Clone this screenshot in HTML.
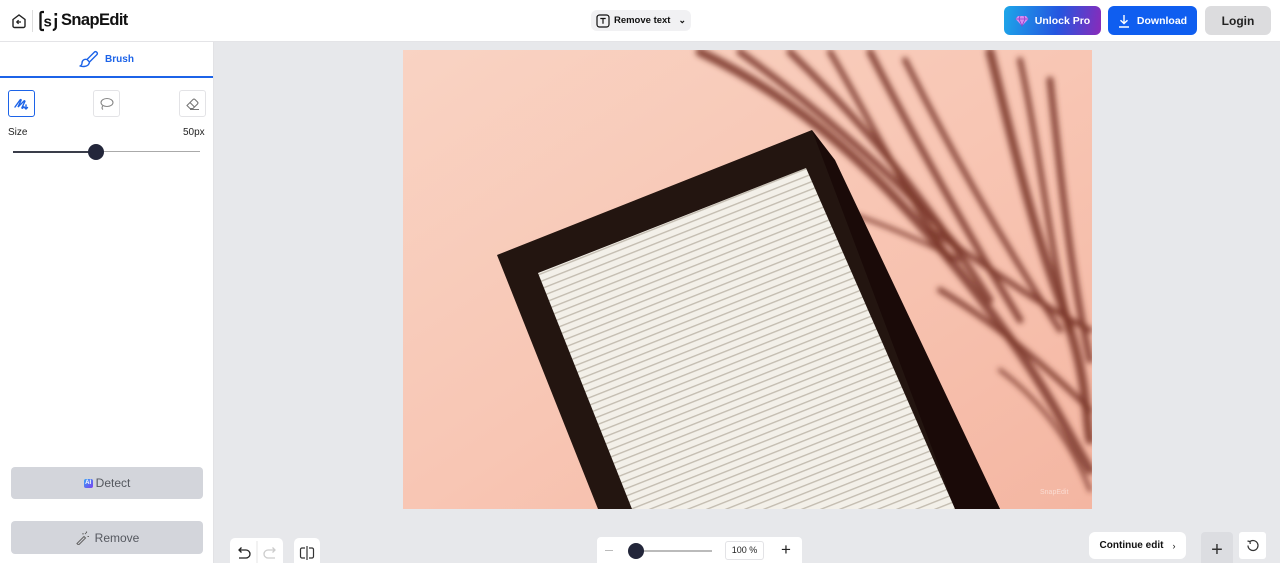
<!DOCTYPE html>
<html><head><meta charset="utf-8"><style>
*{box-sizing:border-box;margin:0;padding:0}
html,body{width:1280px;height:563px;overflow:hidden}
body{font-family:"Liberation Sans",sans-serif;background:#e7e8eb;position:relative;color:#111}
.hdr{position:absolute;left:0;top:0;width:1280px;height:42px;background:#fff;border-bottom:1px solid #e4e4e7}
.side{position:absolute;left:0;top:42px;width:214px;height:521px;background:#fff;border-right:1px solid #e2e2e5}
.abs{position:absolute}
.btn{position:absolute;border-radius:6px;font-weight:bold;font-size:11px;display:flex;align-items:center;justify-content:center}
.wbtn{position:absolute;background:#fff;border-radius:5px;display:flex;align-items:center;justify-content:center}
</style></head><body>
<div class="hdr">
 <svg class="abs" style="left:10px;top:12px" width="18" height="18" viewBox="0 0 18 18"><path d="M3 7.5L9 3l6 4.5V14a1.5 1.5 0 0 1-1.5 1.5h-9A1.5 1.5 0 0 1 3 14z" fill="none" stroke="#222" stroke-width="1.4"/><path d="M11 10H7m1.6-1.8L6.8 10l1.8 1.8" fill="none" stroke="#222" stroke-width="1.3"/></svg>
 <div class="abs" style="left:32px;top:10px;width:1px;height:22px;background:#ddd"></div>
 <svg class="abs" style="left:39px;top:10px" width="20" height="22" viewBox="0 0 20 22"><path d="M5 2H3a1.5 1.5 0 0 0-1.5 1.5v15A1.5 1.5 0 0 0 3 20h2" fill="none" stroke="#111" stroke-width="2.3"/><text x="4.5" y="16.5" font-family="Liberation Sans" font-weight="bold" font-size="15" fill="#111">s</text><rect x="15.5" y="3" width="2.6" height="2.6" fill="#111"/><path d="M16.8 8v9a3 3 0 0 1-3 3" fill="none" stroke="#111" stroke-width="2.3"/></svg>
 <div class="abs" style="left:61px;top:11px;font-size:16.5px;font-weight:bold;letter-spacing:-0.6px">SnapEdit</div>
 <div class="btn" style="left:591px;top:10px;width:100px;height:21px;background:#f1f1f3;font-size:9.5px;color:#111">
  <svg width="14" height="14" viewBox="0 0 14 14" style="margin-right:4px"><rect x="1" y="1" width="12" height="12" rx="2.5" fill="none" stroke="#111" stroke-width="1.2"/><path d="M4.3 4.5h5.4M7 4.5v5.3" stroke="#111" stroke-width="1.2"/></svg>Remove text<span style="margin-left:8px;font-size:9px">&#8964;</span></div>
 <div class="btn" style="left:1004px;top:6px;width:97px;height:29px;background:linear-gradient(100deg,#1da7e9,#2456e0 55%,#8b2ab9);color:#fff;font-size:10.5px">
  <svg width="14" height="12" viewBox="0 0 14 12" style="margin-right:6px"><path d="M3 1h8l2.5 3L7 11 .5 4z" fill="#d78cf0"/><path d="M.5 4h13M5 1 4 4l3 7 3-7-1-3" fill="none" stroke="#8a3bc9" stroke-width=".8"/></svg>Unlock Pro</div>
 <div class="btn" style="left:1108px;top:6px;width:89px;height:29px;background:#0f5ef0;color:#fff;font-size:10.5px">
  <svg width="12" height="14" viewBox="0 0 12 14" style="margin-right:7px"><path d="M6 1v8.5M2.5 6.2 6 9.5l3.5-3.3M1 13h10" fill="none" stroke="#fff" stroke-width="1.4"/></svg>Download</div>
 <div class="btn" style="left:1205px;top:6px;width:66px;height:29px;background:#dcdcde;color:#222;font-size:12px">Login</div>
</div>
<div class="side">
 <div class="abs" style="left:0;top:0;width:213px;height:36px;border-bottom:2px solid #1c63e8;display:flex;align-items:center;justify-content:center;color:#1c63e8;font-size:10px;font-weight:bold">
  <svg width="20" height="18" viewBox="0 0 20 18" style="margin-right:6px"><path d="M8 9.5 15.5 2a1.8 1.8 0 0 1 2.5 2.5L10.5 12M8 9.5c-3-.8-5 1-5 3.5 0 1.3-.8 2.5-2 3 2.8.9 7 .6 8.5-1.5.8-1.1 1-2.5 1-2.5z" fill="none" stroke="#1c63e8" stroke-width="1.4" stroke-linejoin="round"/></svg>Brush</div>
 <div class="abs" style="left:8px;top:48px;width:27px;height:27px;border:1px solid #1c63e8;border-radius:3px;display:flex;align-items:center;justify-content:center"><svg width="15" height="13" viewBox="0 0 15 13"><path d="M1 10 6 3c.6-.8 1.5-.3 1 .5L4 10l6-6c.5-.5 1.2 0 .8.6L8 10.5c-.4.6.3 1 .8.5l1.2-1.2M12 8v4M10.5 10.5 12 12l1.5-1.5" fill="none" stroke="#1c63e8" stroke-width="1.4" stroke-linecap="round"/></svg></div>
 <div class="abs" style="left:93px;top:48px;width:27px;height:27px;border:1px solid #e3e3e6;border-radius:3px;display:flex;align-items:center;justify-content:center"><svg width="15" height="14" viewBox="0 0 15 14"><ellipse cx="8" cy="5.5" rx="6" ry="4" fill="none" stroke="#888" stroke-width="1.1"/><path d="M4 8.5c-1 1.5-1.5 3 0 4" fill="none" stroke="#888" stroke-width="1.1"/></svg></div>
 <div class="abs" style="left:179px;top:48px;width:27px;height:27px;border:1px solid #e3e3e6;border-radius:3px;display:flex;align-items:center;justify-content:center"><svg width="15" height="14" viewBox="0 0 15 14"><path d="M2 8.5 8 2.5a1.5 1.5 0 0 1 2 0l2.5 2.5a1.5 1.5 0 0 1 0 2L8 11.5H5zM5 5.5l4.5 4.5M5 12.5h9" fill="none" stroke="#777" stroke-width="1.1"/></svg></div>
 <div class="abs" style="left:8px;top:85px;font-size:10px;color:#222">Size</div>
 <div class="abs" style="left:183px;top:85px;font-size:10px;color:#222">50px</div>
 <div class="abs" style="left:13px;top:109px;width:84px;height:2px;background:#3a3d4a"></div>
 <div class="abs" style="left:97px;top:109px;width:103px;height:1px;background:#aaa"></div>
 <div class="abs" style="left:88px;top:102px;width:16px;height:16px;border-radius:50%;background:#23263a"></div>
 <div class="btn" style="left:11px;top:425px;width:192px;height:32px;background:#d3d5db;color:#55585f;font-weight:normal;font-size:12px;border-radius:4px">
  <span style="display:inline-block;width:9px;height:9px;border-radius:2px;background:linear-gradient(135deg,#36a2f5,#7b3ff0);color:#fff;font-size:6px;font-weight:bold;line-height:9px;text-align:center;margin-right:3px">AI</span>Detect</div>
 <div class="btn" style="left:11px;top:479px;width:192px;height:33px;background:#d3d5db;color:#55585f;font-weight:normal;font-size:12px;border-radius:4px">
  <svg width="15" height="15" viewBox="0 0 15 15" style="margin-right:5px"><path d="M2 13.5 9 6.5l1.5 1.5-7 7zM8 3v1.5M11.5 1.5V3M12.5 6.5h1.5M10 4l1-1" fill="none" stroke="#666" stroke-width="1.1"/></svg>Remove</div>
</div>

<svg class="abs" style="left:403px;top:50px" width="689" height="459" viewBox="403 50 689 459">
 <defs>
  <linearGradient id="bg" x1="0" y1="0" x2="1" y2="1"><stop offset="0" stop-color="#f9d3c3"/><stop offset=".5" stop-color="#f8c6b4"/><stop offset="1" stop-color="#f4b6a2"/></linearGradient>
  <pattern id="st" width="40" height="7" patternUnits="userSpaceOnUse" patternTransform="rotate(-21.6)"><rect width="40" height="7" fill="#f3f0e9"/><rect y="5" width="40" height="1.4" fill="#c4bdb1"/></pattern>
  <clipPath id="bd"><polygon points="538,273 806,168 955,509 632,509"/></clipPath>
  <filter id="bl"><feGaussianBlur stdDeviation="3"/></filter>
 </defs>
 <rect x="403" y="50" width="689" height="459" fill="url(#bg)"/>
 <g filter="url(#bl)" fill="none" stroke="#7a3528" stroke-opacity=".85" stroke-linecap="round">
  <path d="M700 52C780 90 860 150 950 260S1060 420 1090 470" stroke-width="9"/>
  <path d="M740 52C820 110 900 180 960 250" stroke-width="7"/>
  <path d="M790 52C860 120 920 190 990 300" stroke-width="7"/>
  <path d="M830 52C870 120 910 200 950 260" stroke-width="6"/>
  <path d="M870 52C910 130 960 220 1020 320" stroke-width="7"/>
  <path d="M905 60C945 140 995 230 1060 330" stroke-width="6"/>
  <path d="M990 52C1010 130 1030 220 1060 300S1085 420 1090 440" stroke-width="9"/>
  <path d="M1020 60C1040 150 1050 250 1070 330" stroke-width="6"/>
  <path d="M1050 80C1060 170 1070 270 1090 360" stroke-width="7"/>
  <path d="M930 230C980 260 1030 300 1090 330" stroke-width="6"/>
  <path d="M940 290C990 320 1040 360 1090 410" stroke-width="6"/>
  <path d="M1000 370C1040 400 1070 440 1090 490" stroke-width="4"/>
  <path d="M760 192C820 200 880 220 960 260" stroke-width="4"/>
 </g>
 <polygon points="497,255 812,130 1000,509 598,509" fill="#231510"/>
 <polygon points="812,130 835,160 1000,509 955,509" fill="#1a0a08"/>
 <g clip-path="url(#bd)"><rect x="500" y="150" width="500" height="380" fill="url(#st)"/></g>
 <text x="1040" y="494" font-size="7" fill="#fff" fill-opacity=".5" font-family="Liberation Sans">SnapEdit</text>
</svg>

<div class="wbtn" style="left:230px;top:538px;width:53px;height:30px"><svg width="52" height="24" viewBox="0 0 52 24"><path d="M8 9h7a4 4 0 0 1 0 8H8M10.5 6.5 8 9l2.5 2.5" fill="none" stroke="#222" stroke-width="1.3"/><line x1="26" y1="0" x2="26" y2="24" stroke="#e5e5e5"/><path d="M44 9h-7a4 4 0 0 0 0 8h7M41.5 6.5 44 9l-2.5 2.5" fill="none" stroke="#ccc" stroke-width="1.3"/></svg></div>
<div class="wbtn" style="left:294px;top:538px;width:26px;height:30px"><svg width="16" height="14" viewBox="0 0 16 14"><path d="M8 0v14M6 2H3a1.5 1.5 0 0 0-1.5 1.5v7A1.5 1.5 0 0 0 3 12h3M10 2h3a1.5 1.5 0 0 1 1.5 1.5v7A1.5 1.5 0 0 1 13 12h-3" fill="none" stroke="#333" stroke-width="1.2"/></svg></div>
<div class="wbtn" style="left:597px;top:537px;width:205px;height:30px;border-radius:4px"></div>
<div class="abs" style="left:605px;top:550px;width:8px;height:1px;background:#bbb"></div>
<div class="abs" style="left:636px;top:550px;width:76px;height:2px;background:#bbb"></div>
<div class="abs" style="left:628px;top:543px;width:16px;height:16px;border-radius:50%;background:#23263a"></div>
<div class="abs" style="left:725px;top:541px;width:39px;height:19px;border:1px solid #e3e3e6;border-radius:3px;font-size:9px;text-align:center;line-height:17px;color:#222">100 %</div>
<div class="abs" style="left:781px;top:541px;font-size:17px;color:#222;line-height:18px">+</div>
<div class="wbtn" style="left:1089px;top:532px;width:97px;height:27px;border-radius:6px;font-size:10px;font-weight:bold;color:#111">Continue edit<span style="margin-left:9px;font-weight:normal;font-size:9px">&#8250;</span></div>
<div class="abs" style="left:1201px;top:532px;width:32px;height:35px;background:#dcdde1;border-radius:4px;text-align:center;font-size:20px;line-height:36px;color:#333">+</div>
<div class="wbtn" style="left:1239px;top:532px;width:27px;height:27px;border-radius:3px"><svg width="14" height="14" viewBox="0 0 14 14"><path d="M4 2.5A5 5 0 1 1 2 6.5M4 2.5 1.5 2M4 2.5 4.2 5" fill="none" stroke="#333" stroke-width="1.2"/></svg></div>
</body></html>
